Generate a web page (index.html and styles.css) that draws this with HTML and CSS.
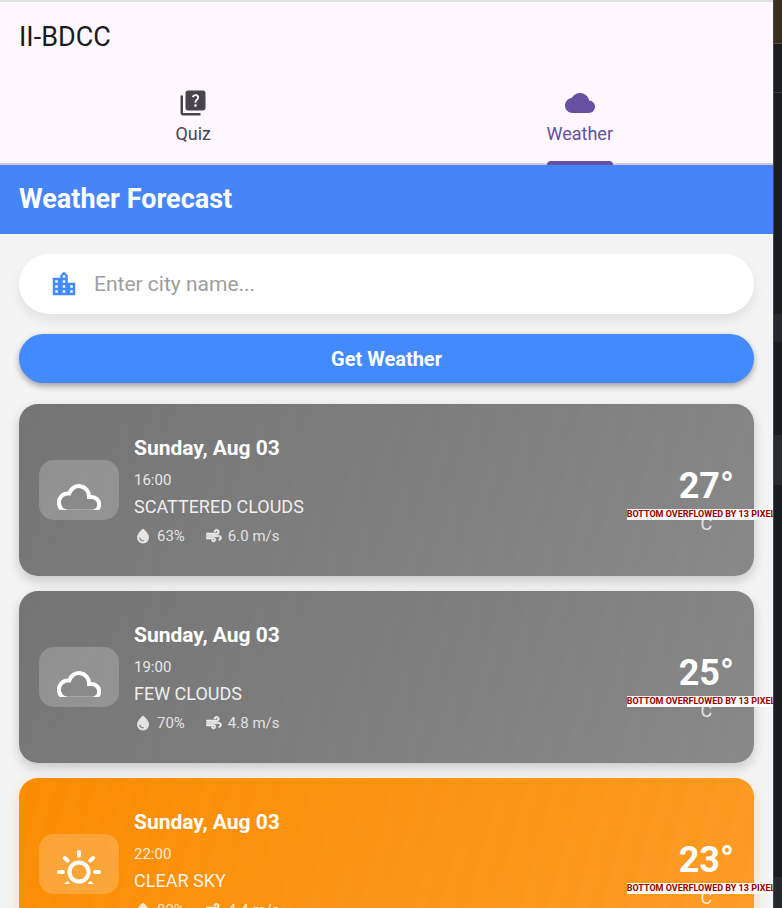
FILE: index.html
```html
<!DOCTYPE html>
<html lang="en">
<head>
<meta charset="utf-8">
<title>II-BDCC</title>
<meta name="viewport" content="width=device-width, initial-scale=1">
<link rel="stylesheet" href="styles.css">
</head>
<body>
<svg class="symbols" aria-hidden="true">
  <symbol id="drop" viewBox="0 0 24 24"><path d="M12 2c-5.33 4.55-8 8.48-8 11.8 0 4.98 3.8 8.2 8 8.2s8-3.22 8-8.2c0-3.32-2.67-7.25-8-11.8zM7.83 14c.37 0 .67.26.74.62.41 2.22 2.28 2.98 3.64 2.87.43-.02.79.32.79.75 0 .4-.32.73-.72.75-2.13.13-4.62-1.09-5.19-4.12-.08-.45.28-.87.74-.87z"/></symbol>
  <symbol id="air" viewBox="0 0 24 24"><path stroke="currentColor" stroke-width=".8" d="M14.5 17c0 1.65-1.35 3-3 3s-3-1.35-3-3h2c0 .55.45 1 1 1s1-.45 1-1-.45-1-1-1H2v-2h9.5c1.65 0 3 1.35 3 3zM19 6.5C19 4.57 17.43 3 15.5 3S12 4.57 12 6.5h2c0-.83.67-1.5 1.5-1.5s1.5.67 1.5 1.5S16.33 8 15.5 8H2v2h13.5c1.93 0 3.5-1.57 3.5-3.5zm-.5 4.5H2v2h16.5c.83 0 1.5.67 1.5 1.5s-.67 1.5-1.5 1.5v2c1.93 0 3.5-1.57 3.5-3.5S20.43 11 18.5 11z"/></symbol>
  <symbol id="cloud" viewBox="0 -1 24 19"><path fill="rgba(0,0,0,.06)" stroke="currentColor" stroke-width="2.2" d="M19 19H6a5 5 0 0 1 0-10h.71a5.5 5.5 0 0 1 10.79 1.5v.5H19a4 4 0 0 1 0 8z"/></symbol>
  <symbol id="sun" viewBox="0 0 24 19"><g fill="none" stroke="currentColor" stroke-width="2.2" stroke-linecap="round"><circle cx="12" cy="12.5" r="5.2"/><path d="M12 1.6v2M1.1 12.5h2.1M20.8 12.5H22.9M4.3 4.8l1.5 1.5M19.7 4.8l-1.5 1.5M4.3 20.2l1.5-1.5M19.7 20.2l-1.5-1.5"/></g></symbol>
</svg>
<div class="window">
  <div class="app">
    <header class="appbar">
      <h1>II-BDCC</h1>
      <nav class="tabs">
        <a class="tab" href="#quiz">
          <svg viewBox="0 0 24 24" aria-hidden="true"><path d="M4 6H2v14c0 1.1.9 2 2 2h14v-2H4V6z"/><path d="M20 2H8c-1.1 0-2 .9-2 2v12c0 1.1.9 2 2 2h12c1.1 0 2-.9 2-2V4c0-1.1-.9-2-2-2zm-5.99 13c-.59 0-1.05-.47-1.05-1.05 0-.59.47-1.04 1.05-1.04.59 0 1.04.45 1.04 1.04-.01.58-.45 1.05-1.04 1.05zm2.5-6.17c-.63.93-1.23 1.21-1.56 1.81-.13.24-.18.4-.18 1.18h-1.52c0-.41-.06-1.08.26-1.65.41-.73 1.18-1.16 1.63-1.8.48-.68.21-1.94-1.14-1.94-.88 0-1.32.67-1.5 1.23l-1.37-.57C11.51 5.96 12.52 5 13.99 5c1.23 0 2.08.56 2.51 1.26.37.6.58 1.73.01 2.57z"/></svg>
          <span>Quiz</span>
        </a>
        <a class="tab selected" href="#weather" aria-current="page">
          <svg viewBox="0 0 24 24" aria-hidden="true"><path d="M19.35 10.04C18.67 6.59 15.64 4 12 4 9.11 4 6.6 5.64 5.35 8.04 2.34 8.36 0 10.91 0 14c0 3.31 2.69 6 6 6h13c2.76 0 5-2.24 5-5 0-2.64-2.05-4.78-4.65-4.96z"/></svg>
          <span>Weather</span>
        </a>
      </nav>
    </header>
    <h2 class="banner">Weather Forecast</h2>
    <main>
      <label class="search">
        <svg viewBox="0 0 24 24" aria-hidden="true"><path d="M15 11V5l-3-3-3 3v2H3v14h18V11h-6zm-8 8H5v-2h2v2zm0-4H5v-2h2v2zm0-4H5V9h2v2zm6 8h-2v-2h2v2zm0-4h-2v-2h2v2zm0-4h-2V9h2v2zm0-4h-2V5h2v2zm6 12h-2v-2h2v2zm0-4h-2v-2h2v2z"/></svg>
        <input type="text" placeholder="Enter city name..." aria-label="City name">
      </label>
      <button class="submit" type="button">Get Weather</button>
      <article class="card cloudy">
        <div class="tile"><svg><use href="#cloud"/></svg></div>
        <div class="info">
          <h3>Sunday, Aug 03</h3>
          <p class="time">16:00</p>
          <p class="sky">SCATTERED CLOUDS</p>
          <p class="stats"><svg><use href="#drop"/></svg><span>63%</span><svg><use href="#air"/></svg><span>6.0 m/s</span></p>
        </div>
        <div class="temp"><strong>27°</strong><span>C</span><em>BOTTOM OVERFLOWED BY 13 PIXELS</em></div>
      </article>
      <article class="card cloudy">
        <div class="tile"><svg><use href="#cloud"/></svg></div>
        <div class="info">
          <h3>Sunday, Aug 03</h3>
          <p class="time">19:00</p>
          <p class="sky">FEW CLOUDS</p>
          <p class="stats"><svg><use href="#drop"/></svg><span>70%</span><svg><use href="#air"/></svg><span>4.8 m/s</span></p>
        </div>
        <div class="temp"><strong>25°</strong><span>C</span><em>BOTTOM OVERFLOWED BY 13 PIXELS</em></div>
      </article>
      <article class="card sunny">
        <div class="tile"><svg><use href="#sun"/></svg></div>
        <div class="info">
          <h3>Sunday, Aug 03</h3>
          <p class="time">22:00</p>
          <p class="sky">CLEAR SKY</p>
          <p class="stats"><svg><use href="#drop"/></svg><span>80%</span><svg><use href="#air"/></svg><span>4.4 m/s</span></p>
        </div>
        <div class="temp"><strong>23°</strong><span>C</span><em>BOTTOM OVERFLOWED BY 13 PIXELS</em></div>
      </article>
    </main>
  </div>
  <div class="backdrop"></div>
</div>
</body>
</html>
```

FILE: styles.css
```css
* { box-sizing: border-box; margin: 0; padding: 0; }

body {
  font-family: Roboto, sans-serif;
  color: #1d1b20;
  overflow: hidden;
}

svg { fill: currentColor; flex: none; }
.symbols { display: none; }

.window { display: flex; height: 100vh; overflow: hidden; }

.app {
  flex: 1;
  min-width: 0;
  overflow: hidden;
  background: #f4f4f4;
  border-top: 2px solid #e1e1e1;
}

.backdrop {
  flex: none;
  width: 9px;
  border-left: 1px solid #48484b;
  background: linear-gradient(#3a2f20 0 43px, #5a4a30 43px 44px, #1c1e21 44px 92px, #37393d 92px 93px, #1b1d1f 93px 314px, #26282d 314px 342px, #1b1c1e 342px 435px, #282a2e 435px 485px, #1a1b1e 485px 877px, #28292c 877px);
}

.appbar { background: #fef7ff; border-bottom: 2px solid #cfc8dc; }
.appbar h1 { font-size: 27px; font-weight: 400; line-height: 32px; padding: 19px 19px 17px; }

.tabs { display: flex; height: 93px; }
.tab {
  flex: 1;
  display: flex;
  flex-direction: column;
  align-items: center;
  padding-top: 18px;
  color: #49454f;
  font-size: 18px;
  line-height: 24px;
  text-decoration: none;
}
.tab svg { width: 30px; height: 30px; }
.tab span { flex: 1; display: flex; flex-direction: column; padding-top: 4px; }
.tab.selected { color: #6750a4; }
.tab.selected span::after {
  content: "";
  height: 4px;
  margin: auto 0 -2px;
  border-radius: 4px 4px 0 0;
  background: #6750a4;
}

.banner {
  background: #4685f8;
  color: #fff;
  font-size: 27px;
  line-height: 32px;
  padding: 18px 19px 19px;
}

main { display: flex; flex-direction: column; padding: 20px 19px; }

.search {
  display: flex;
  align-items: center;
  gap: 15px;
  height: 60px;
  padding: 0 30px;
  border-radius: 30px;
  background: #fff;
  color: #448aff;
  box-shadow: 0 6px 12px rgba(0, 0, 0, .08);
}
.search svg { width: 30px; height: 30px; }
.search input {
  flex: 1;
  min-width: 0;
  border: 0;
  outline: 0;
  background: none;
  font: 400 21px/28px Roboto, sans-serif;
  color: #1d1b20;
}
.search input::placeholder { color: #9e9e9e; opacity: 1; }

.submit {
  height: 49px;
  margin: 20px 0 21px;
  border: 0;
  border-radius: 25px;
  background: #448aff;
  color: #fff;
  font: 700 20px/28px Roboto, sans-serif;
  box-shadow: 0 3px 6px rgba(0, 0, 0, .35);
}

.card {
  flex: none;
  display: flex;
  align-items: center;
  gap: 15px;
  height: 172px;
  margin-bottom: 15px;
  padding: 20px;
  border-radius: 19px;
  color: #fff;
}
.cloudy {
  background: repeating-linear-gradient(105deg, rgba(255, 255, 255, .008) 0 8px, transparent 14px 22px, rgba(255, 255, 255, .008) 26px), linear-gradient(135deg, #747474, #888);
  box-shadow: 0 5px 12px rgba(0, 0, 0, .18);
}
.sunny {
  background: repeating-linear-gradient(105deg, rgba(255, 255, 255, .015) 0 8px, transparent 14px 22px, rgba(255, 255, 255, .015) 26px), linear-gradient(135deg, #fb8c00, #fd9b26);
  box-shadow: 0 5px 12px rgba(251, 140, 0, .25);
}

.tile {
  display: flex;
  justify-content: center;
  width: 80px;
  height: 60px;
  padding-top: 15px;
  border-radius: 15px;
  background: rgba(255, 255, 255, .2);
}
.tile svg { width: 44px; height: 35px; }

.info { flex: 1; padding-top: 2px; }
.info h3 { font-size: 21px; line-height: 26px; }
.time { margin-top: 7px; font-size: 15px; line-height: 24px; color: rgba(255, 255, 255, .85); }
.sky { margin-top: 3px; font-size: 18px; line-height: 24px; color: rgba(255, 255, 255, .9); }
.stats { display: flex; align-items: center; margin-top: 5px; font-size: 15px; line-height: 24px; color: rgba(255, 255, 255, .8); }
.stats svg { width: 18px; height: 18px; }
.stats span { margin: 0 20px 0 5px; }

.temp {
  position: relative;
  display: flex;
  flex-direction: column;
  align-items: center;
  height: 60px;
}
.temp strong { font-size: 36px; line-height: 52px; }
.temp span { font-size: 18px; line-height: 24px; color: rgba(255, 255, 255, .8); }
.temp em {
  position: absolute;
  bottom: 0;
  left: -52px;
  background: rgba(255, 255, 255, .95);
  color: #900;
  font-size: 9px;
  line-height: 11px;
  font-style: normal;
  font-weight: 700;
  white-space: nowrap;
}
```
